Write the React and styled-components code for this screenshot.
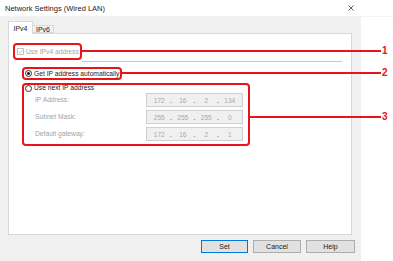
import React from "react";
import styled, { createGlobalStyle } from "styled-components";

const Global = createGlobalStyle`
  html, body { margin: 0; padding: 0; background: #ffffff; }
  body { font-family: "Liberation Sans", Arial, sans-serif; }
  * { box-sizing: border-box; }
`;

const RED = "#e8131b";

const Page = styled.div`
  position: relative;
  width: 393px;
  height: 261px;
  overflow: hidden;
  background: #fff;
`;

const Win = styled.div`
  width: 361px;
  height: 261px;
  display: flex;
  flex-direction: column;
  background: #f0f0f0;
`;

const TitleBar = styled.div`
  height: 17px;
  flex: none;
  display: flex;
  align-items: center;
  justify-content: space-between;
  padding: 0 6px 0 5px;
  background: #fff;
  width: 393px;
  border-bottom: 1px solid #f3f3f3;
`;

const Title = styled.span`
  font-size: 7.5px;
  color: #1a1a1a;
`;

const Close = styled.svg`
  width: 6px;
  height: 6px;
  margin-right: 33px;
`;

const Body = styled.div`
  flex: 1;
  display: flex;
  flex-direction: column;
  padding: 4px 9px 0 8px;
`;

const Tabs = styled.div`
  display: flex;
  align-items: flex-end;
  height: 12px;
  position: relative;
  z-index: 1;
`;

const Tab = styled.div`
  height: ${(p) => (p.$active ? "13px" : "8px")};
  margin-bottom: ${(p) => (p.$active ? "-1px" : "0")};
  width: ${(p) => (p.$active ? "25px" : "21px")};
  display: flex;
  align-items: center;
  justify-content: center;
  font-size: 7px;
  color: #1a1a1a;
  background: ${(p) => (p.$active ? "#fff" : "#f0f0f0")};
  border: 1px solid #d9d9d9;
  border-bottom: ${(p) => (p.$active ? "none" : "1px solid #d9d9d9")};
  border-left: ${(p) => (p.$active ? "1px solid #d9d9d9" : "none")};
`;

const Panel = styled.div`
  height: 202px;
  background: #fff;
  border: 1px solid #d9d9d9;
  padding: 9px 8px 0 4px;
  display: flex;
  flex-direction: column;
`;

const Row1 = styled.div`
  display: flex;
  align-items: flex-end;
`;

const Highlight = styled.div`
  display: ${(p) => (p.$block ? "flex" : "inline-flex")};
  flex-direction: ${(p) => (p.$block ? "column" : "row")};
  align-items: ${(p) => (p.$block ? "stretch" : "center")};
  align-self: flex-start;
  flex: none;
  border: 2px solid ${RED};
  border-radius: 4px;
  height: ${(p) => p.$h};
  width: ${(p) => p.$w || "auto"};
  margin-left: ${(p) => p.$ml || "0"};
  margin-top: ${(p) => p.$mt || "0"};
  padding: ${(p) => p.$pad || "0 3px 0 2px"};
  overflow: visible;
`;

const Rule = styled.div`
  flex: 1;
  height: 1px;
  background: #c8c8c8;
  margin-bottom: -2px;
  margin-right: 1px;
`;

const Check = styled.span`
  width: 7px;
  height: 7px;
  border: 1px solid #c4c4c4;
  background: #fff;
  display: inline-flex;
  align-items: center;
  justify-content: center;
  margin-right: 2px;
  flex: none;
`;

const Radio = styled.span`
  width: 7px;
  height: 7px;
  border-radius: 50%;
  border: 1px solid #333;
  background: #fff;
  display: inline-flex;
  align-items: center;
  justify-content: center;
  margin-right: 2px;
  flex: none;
  &::after {
    content: "";
    display: ${(p) => (p.$on ? "block" : "none")};
    width: 3px;
    height: 3px;
    border-radius: 50%;
    background: #111;
  }
`;

const Label = styled.span`
  font-size: 6.7px;
  line-height: 8px;
  color: ${(p) => (p.$disabled ? "#a3a3a3" : "#1a1a1a")};
  white-space: nowrap;
`;

const RadioRow = styled.div`
  display: flex;
  align-items: center;
  height: 8px;
  margin-top: -1px;
  margin-bottom: 1px;
`;

const Fields = styled.div`
  display: grid;
  grid-template-columns: 111px 97px;
  row-gap: 3px;
  padding-left: 10px;
  align-items: center;
`;

const IpBox = styled.div`
  height: 14px;
  border: 1px solid #cfcfcf;
  background: #f0f0f0;
  display: grid;
  grid-template-columns: 1fr 5px 1fr 5px 1fr 5px 1fr;
  align-items: center;
  padding: 0 3px;
  font-size: 6.5px;
  color: #a8a8a8;
  text-align: center;
`;

const Dot = styled.span`
  color: #8a8a8a;
  font-weight: bold;
`;

const Footer = styled.div`
  height: 26px;
  display: flex;
  justify-content: flex-end;
  gap: 5px;
  padding-top: 5px;
  margin-right: -3px;
`;

const Btn = styled.div`
  width: ${(p) => p.$w}px;
  height: 13px;
  display: flex;
  align-items: center;
  justify-content: center;
  background: #e1e1e1;
  border: 1px solid ${(p) => (p.$primary ? "#0078d7" : "#adadad")};
  font-size: 7px;
  color: #1a1a1a;
`;

const Callout = styled.div`
  position: absolute;
  left: ${(p) => p.$x}px;
  top: ${(p) => p.$y - 1}px;
  width: ${(p) => 381 - p.$x}px;
  height: 2px;
  background: ${RED};
`;

const Num = styled.div`
  position: absolute;
  left: 382px;
  top: ${(p) => p.$y - 6}px;
  height: 12px;
  line-height: 12px;
  font-size: 10px;
  font-weight: bold;
  color: ${RED};
`;

const Ip = ({ parts }) => (
  <IpBox>
    <span>{parts[0]}</span>
    <Dot>.</Dot>
    <span>{parts[1]}</span>
    <Dot>.</Dot>
    <span>{parts[2]}</span>
    <Dot>.</Dot>
    <span>{parts[3]}</span>
  </IpBox>
);

export default function App() {
  return (
    <Page>
      <Global />
      <Win>
        <TitleBar>
          <Title>Network Settings (Wired LAN)</Title>
          <Close viewBox="0 0 6 6">
            <path d="M0.5 0.5L5.5 5.5M5.5 0.5L0.5 5.5" stroke="#333" strokeWidth="0.8" />
          </Close>
        </TitleBar>
        <Body>
          <Tabs>
            <Tab $active>IPv4</Tab>
            <Tab>IPv6</Tab>
          </Tabs>
          <Panel>
            <Row1>
              <Highlight $h="17px" $w="69px" $pad="0 0 0 2px">
                <Check>
                  <svg width="5" height="5" viewBox="0 0 5 5">
                    <path d="M0.5 2.6L2 4L4.5 1" stroke="#c4c4c4" strokeWidth="0.9" fill="none" />
                  </svg>
                </Check>
                <Label $disabled>Use IPv4 address</Label>
              </Highlight>
              <Rule />
            </Row1>
            <Highlight $h="13px" $w="100px" $ml="9px" $mt="7px" $pad="0 0 0 1px">
              <Radio $on />
              <Label>Get IP address automatically</Label>
            </Highlight>
            <Highlight $block $w="228px" $ml="9px" $mt="3px" $pad="0 0 3px 1px">
              <RadioRow>
                <Radio />
                <Label>Use next IP address</Label>
              </RadioRow>
              <Fields>
                <Label $disabled>IP Address:</Label>
                <Ip parts={["172", "16", "2", "134"]} />
                <Label $disabled>Subnet Mask:</Label>
                <Ip parts={["255", "255", "255", "0"]} />
                <Label $disabled>Default gateway:</Label>
                <Ip parts={["172", "16", "2", "1"]} />
              </Fields>
            </Highlight>
          </Panel>
          <Footer>
            <Btn $w={47} $primary>Set</Btn>
            <Btn $w={48}>Cancel</Btn>
            <Btn $w={49}>Help</Btn>
          </Footer>
        </Body>
      </Win>
      <Callout $x={82} $y={51} />
      <Num $y={51}>1</Num>
      <Callout $x={122} $y={73} />
      <Num $y={73}>2</Num>
      <Callout $x={250} $y={117} />
      <Num $y={117}>3</Num>
    </Page>
  );
}
